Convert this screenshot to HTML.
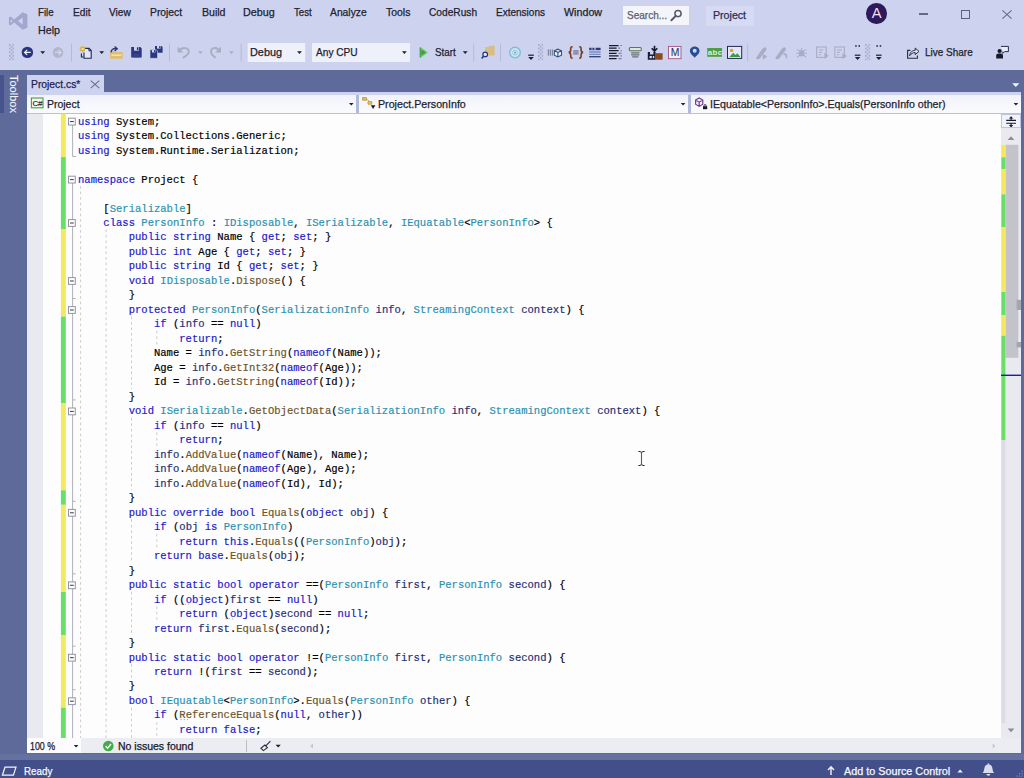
<!DOCTYPE html>
<html><head><meta charset="utf-8"><title>Project - Microsoft Visual Studio</title>
<style>
html,body{margin:0;padding:0}
body{width:1024px;height:778px;position:relative;overflow:hidden;background:#5E6A99;font-family:"Liberation Sans",sans-serif;font-size:10.4px;color:#1E1E2E}
.a{position:absolute}
.t{position:absolute;white-space:pre;line-height:12px;transform-origin:0 0;-webkit-text-stroke:0.25px}
#top{left:0;top:0;width:1024px;height:69.5px;background:#CDD3EE}
.sep{position:absolute;width:1px;top:43.5px;height:18px;background:#B4BBD8}
.combo{position:absolute;top:43px;height:19px;background:#EEF0FA}
.dd{position:absolute;width:0;height:0;border-left:2.4px solid transparent;border-right:2.4px solid transparent;border-top:2.6px solid #1E1E2E}
.ddg{border-top-color:#A9ADC4}
#code{position:absolute;left:78px;top:114.6px;-webkit-text-stroke:0.18px;font-family:"Liberation Mono",monospace;font-size:10.55px;line-height:14.49px;color:#000}
#code div{height:14.49px;white-space:pre}
.k{color:#2418C8}
.y{color:#2B91AF}
.m{color:#6E5428}
.l{color:#1F2F72}
</style></head><body>
<div class="a" id="top">
<!-- VS logo -->
<svg class="a" style="left:8px;top:11px" width="21" height="20" viewBox="0 0 21 20"><path d="M14.6 1.2 L19.4 3.2 V16.8 L14.6 18.8 L6.2 11.6 L2.6 14.4 L0.9 13.5 V6.5 L2.6 5.6 L6.2 8.4 Z M14.6 6.4 L10 10 L14.6 13.6 Z M2.7 8.2 V11.8 L4.7 10 Z" fill="#A3A7D0" fill-rule="evenodd"/></svg>
<span class="t" style="left:38.48px;top:7.2px;transform:scaleX(0.9361)">File</span>
<span class="t" style="left:72.50px;top:7.2px;transform:scaleX(0.9764)">Edit</span>
<span class="t" style="left:108.82px;top:7.2px;transform:scaleX(0.9752)">View</span>
<span class="t" style="left:149.70px;top:7.2px;transform:scaleX(0.9933)">Project</span>
<span class="t" style="left:201.60px;top:7.2px;transform:scaleX(1.0165)">Build</span>
<span class="t" style="left:243.40px;top:7.2px;transform:scaleX(1.0359)">Debug</span>
<span class="t" style="left:293.55px;top:7.2px;transform:scaleX(0.9323)">Test</span>
<span class="t" style="left:330.47px;top:7.2px;transform:scaleX(0.9930)">Analyze</span>
<span class="t" style="left:386.17px;top:7.2px;transform:scaleX(1.0070)">Tools</span>
<span class="t" style="left:429.24px;top:7.2px;transform:scaleX(0.9784)">CodeRush</span>
<span class="t" style="left:496.10px;top:7.2px;transform:scaleX(0.9636)">Extensions</span>
<span class="t" style="left:564.25px;top:7.2px;transform:scaleX(1.0303)">Window</span>
<span class="t" style="left:38.45px;top:25.4px;transform:scaleX(1.0313)">Help</span>
<!-- search -->
<div class="a" style="left:623px;top:6px;width:66px;height:18.6px;background:#F4F5FB;box-shadow:0 0 0 0.5px #C9CFE6"></div>
<span class="t" style="left:627.03px;top:9.8px;color:#5A5D6E;transform:scaleX(0.9637)">Search...</span>
<svg class="a" style="left:669px;top:8px" width="15" height="15" viewBox="0 0 15 15"><circle cx="9" cy="5.6" r="3.1" fill="none" stroke="#55586A" stroke-width="1.5"/><path d="M6.8 7.9 L2.4 12.2" stroke="#55586A" stroke-width="2" stroke-linecap="round"/></svg>
<!-- project label -->
<div class="a" style="left:706.3px;top:5.8px;width:48.2px;height:20px;background:#D6DBF3"></div>
<span class="t" style="left:713.10px;top:10px;color:#2A2E55;transform:scaleX(1.0220)">Project</span>
<!-- avatar -->
<div class="a" style="left:866.4px;top:3px;width:20.6px;height:20.6px;border-radius:50%;background:#2C1A5C"></div>
<span class="t" style="left:871.8px;top:5.4px;font-size:14.7px;line-height:16px;color:#F3DDF3;-webkit-text-stroke:0">A</span>
<!-- window buttons -->
<div class="a" style="left:919px;top:13.4px;width:9px;height:1.2px;background:#666B85"></div>
<div class="a" style="left:960.5px;top:10px;width:7.6px;height:6.6px;border:1.1px solid #5D6280"></div>
<svg class="a" style="left:1001px;top:9px" width="12" height="11" viewBox="0 0 12 11"><path d="M1.4 1.3 L10.6 9.6 M10.6 1.3 L1.4 9.6" stroke="#666B85" stroke-width="1.1" fill="none"/></svg>
<!-- toolbar -->
<svg class="a" style="left:0;top:36px" width="1024" height="34" viewBox="0 36 1024 34">
<defs>
<pattern id="grip" width="3.7" height="3.74" patternUnits="userSpaceOnUse"><rect x="0.2" y="0.3" width="1.2" height="1.2" fill="#7780B0"/><rect x="2.05" y="2.17" width="1.2" height="1.2" fill="#7780B0"/></pattern>
</defs>
<g transform="translate(8.9,43.8)"><rect x="0" y="0" width="5.2" height="16.4" fill="url(#grip)"/></g>
<!-- back -->
<circle cx="27.4" cy="52.4" r="5.7" fill="#28347F"/>
<path d="M24.6 52.4 H30.8 M27.2 49.9 L24.6 52.4 L27.2 54.9" stroke="#EEF1FC" stroke-width="1.3" fill="none"/>
<path d="M40.3 51.3 h4.8 l-2.4 2.7z" fill="#1E1E2E"/>
<!-- forward disabled -->
<circle cx="58" cy="52.4" r="5.3" fill="#B3B7CE"/>
<path d="M55 52.4 H61 M58.5 50 L61 52.4 L58.5 54.8" stroke="#D3D8EE" stroke-width="1.3" fill="none"/>
<rect x="71" y="43.5" width="1" height="18" fill="#B4BBD8"/>
<!-- new project -->
<path d="M84.9 48.4 H89.1 L91.2 50.5 V58.2 H84 V52.6" fill="#E3E7F7" stroke="#1F2A55" stroke-width="1.1"/>
<path d="M88.9 48.5 V50.8 H91.1" fill="none" stroke="#1F2A55" stroke-width="1"/>
<path d="M82.6 46 V51.8 M79.7 48.9 H85.5 M80.5 46.8 L84.7 51 M84.7 46.8 L80.5 51" stroke="#D9A92A" stroke-width="1.1"/>
<circle cx="82.6" cy="48.9" r="1.2" fill="#F3E3A0"/>
<path d="M81.4 53.6 v3.4 h2.2" stroke="#1F2A55" stroke-width="1.1" fill="none"/>
<path d="M99.3 51.3 h4.8 l-2.4 2.7z" fill="#1E1E2E"/>
<!-- open -->
<path d="M110 58.7 V50.8 H113.6 L114.6 52 H122.7 V58.7 Z" fill="#DDBE73"/>
<path d="M111.4 54.4 H121.4 V56 H111.4 Z" fill="#F0E0AE"/>
<path d="M111.2 52.4 C111 49.4 113.4 48.3 116.4 48.6 M114.6 46.4 L117.2 48.7 L114.6 51" stroke="#28347F" stroke-width="1.4" fill="none"/>
<!-- save -->
<path d="M131.2 47 H140.3 L141.7 48.4 V57.4 H131.2 Z" fill="#2B3780"/>
<rect x="134" y="47" width="4.8" height="3.7" fill="#CDD3EE"/><rect x="136.9" y="47.3" width="1.4" height="2.7" fill="#2B3780"/>
<rect x="133.4" y="53.6" width="6" height="3.8" fill="#35428A"/>
<!-- save all -->
<path d="M155 46 H161.5 L162.6 47.1 V52.8 H155 Z" fill="#2B3780"/>
<rect x="157" y="46" width="3.6" height="2.6" fill="#CDD3EE"/><rect x="159.1" y="46.2" width="1.1" height="2" fill="#2B3780"/>
<path d="M150 49.8 H156.3 L157.5 51 V58.3 H150 Z" fill="#2B3780" stroke="#CDD3EE" stroke-width="0.6"/>
<rect x="152" y="50" width="3.4" height="2.5" fill="#CDD3EE"/><rect x="154" y="50.2" width="1" height="1.9" fill="#2B3780"/>
<rect x="169" y="43.5" width="1" height="18" fill="#B4BBD8"/>
<!-- undo disabled -->
<path d="M179.6 50 C182.6 47 189 47.4 188.8 51.8 C188.7 54.4 186 56.2 182.8 57.8" stroke="#A9ADC4" stroke-width="1.9" fill="none"/>
<path d="M177.6 46.6 V52.4 H183.4 Z" fill="#A9ADC4"/>
<path d="M197.9 51.3 h4.8 l-2.4 2.7z" fill="#A9ADC4"/>
<!-- redo disabled -->
<path d="M219 50 C216.4 47 210.8 47.4 211 51.8 C211.1 54.4 213.2 56.2 215.8 57.8" stroke="#A9ADC4" stroke-width="1.9" fill="none"/>
<path d="M221 46.6 V52.4 H215.2 Z" fill="#A9ADC4"/>
<path d="M229.1 51.3 h4.8 l-2.4 2.7z" fill="#A9ADC4"/>
<rect x="240.7" y="43.5" width="1" height="18" fill="#B4BBD8"/>
<!-- combos -->
<rect x="247.7" y="43" width="57.5" height="19" fill="#EEF0FA"/>
<path d="M297.1 51.3 h4.8 l-2.4 2.7z" fill="#1E1E2E"/>
<rect x="312" y="43" width="98" height="19" fill="#EEF0FA"/>
<path d="M402 51.3 h4.8 l-2.4 2.7z" fill="#1E1E2E"/>
<!-- play -->
<path d="M420.6 48 L427 52.5 L420.6 57 Z" fill="#5A8A5E" stroke="#57DC57" stroke-width="1.3" stroke-linejoin="round"/>
<path d="M420.2 47.4 V57.6" stroke="#3E8E46" stroke-width="1"/>
<path d="M462.8 51.3 h4.8 l-2.4 2.7z" fill="#1E1E2E"/>
<rect x="473.2" y="43.5" width="1" height="18" fill="#B4BBD8"/>
<!-- find in files -->
<path d="M485 47 H488.6 L489.8 45.8 H494.6 V55.4 H485 Z" fill="#D8BE80"/>
<circle cx="485.2" cy="54.4" r="2.3" fill="#E8ECFA" stroke="#22357E" stroke-width="1.2"/>
<path d="M483.6 56.2 L481.6 58.4" stroke="#22357E" stroke-width="1.5"/>
<rect x="500" y="43.5" width="1" height="18" fill="#B4BBD8"/>
<!-- circular icon -->
<circle cx="515" cy="52.6" r="5.3" fill="#CFE4F2" stroke="#7DBBDA" stroke-width="1.4"/>
<circle cx="515" cy="52.6" r="2.4" fill="#E4F1F9" stroke="#8AC2DE" stroke-width="0.9"/>
<rect x="514.3" y="51.6" width="1.4" height="2" fill="#4A8DB5"/>
<!-- overflow -->
<rect x="528.2" y="54.6" width="5.6" height="1.2" fill="#1E1E2E"/><path d="M528.2 57 h5.6 l-2.8 3z" fill="#1E1E2E"/>
<g transform="translate(538,43.8)"><rect x="0" y="0" width="5.2" height="16.4" fill="url(#grip)"/></g>
<!-- cube icon -->
<path d="M548.3 49.4 V55.6 M550.3 49.4 V55.6 M552.3 49.4 V55.6" stroke="#6F7391" stroke-width="1"/>
<path d="M554.3 50.8 L557.9 49.2 L561.5 50.8 V55.2 L557.9 56.9 L554.3 55.2 Z M554.3 50.8 L557.9 52.4 L561.5 50.8 M557.9 52.4 V56.9" fill="#EEF0FA" stroke="#30507E" stroke-width="1.1"/>
<!-- braces -->
<path d="M572.6 46.7 C570.5 46.7 570.7 48 570.7 49.7 C570.7 51.4 570.2 52.2 568.7 52.4 C570.2 52.6 570.7 53.4 570.7 55.1 C570.7 56.8 570.5 58.1 572.6 58.1 M579.2 46.7 C581.3 46.7 581.1 48 581.1 49.7 C581.1 51.4 581.6 52.2 583.1 52.4 C581.6 52.6 581.1 53.4 581.1 55.1 C581.1 56.8 581.3 58.1 579.2 58.1" stroke="#7A3E1A" stroke-width="1.6" fill="none"/>
<rect x="573.2" y="50" width="5.4" height="4.8" fill="#8D93B5"/>
<!-- blue lines -->
<path d="M589.2 48.9 h2.4 M592.4 48.9 h2 M595.6 48.9 h5" stroke="#2C3A78" stroke-width="2.2"/>
<path d="M589.2 51.8 h11.4" stroke="#8E9CCB" stroke-width="2.4"/>
<path d="M589.2 54.3 h11.4" stroke="#6F7FB5" stroke-width="1.1"/>
<path d="M589.2 56.7 h11.4" stroke="#2C3A78" stroke-width="1.3"/>
<!-- black lines -->
<path d="M609 45.5 h9.6 M609 48.1 h7.6 M609 50.7 h9.6 M609 53.3 h7.6 M609 55.9 h9.6 M609 58.7 h7.6" stroke="#17182A" stroke-width="1.25"/>
<path d="M620.4 45.5 h1.4 M618.4 48.1 h1.6 M620.4 50.7 h1.4 M618.4 53.3 h3.2 M620.4 55.9 h1.4 M618.4 58.7 h3.2" stroke="#6A6F8C" stroke-width="1.1"/>
<!-- structure -->
<rect x="629.3" y="47.5" width="12" height="3.3" rx="1" fill="#DCE6DC" stroke="#5B7560" stroke-width="1.1"/>
<path d="M631.2 52.8 H639.4 M631.2 54.8 H639.4 M632.2 56.8 H638.4" stroke="#667276" stroke-width="1.2"/>
<!-- download -->
<path d="M654.5 45.8 V50.6 M651.7 48.2 L654.5 51 L657.3 48.2" stroke="#17182A" stroke-width="1.6" fill="none"/>
<path d="M647.8 52 H650 V54.4 H653.4 V52 H655.6 V59.7 H647.8 Z" fill="#1B1D33"/>
<rect x="649.6" y="56" width="2.2" height="2.2" fill="#DDE2F5"/><rect x="652.8" y="56" width="1.4" height="2.2" fill="#DDE2F5"/>
<rect x="655.6" y="53.2" width="7" height="6.5" fill="#8A4A22"/>
<!-- M -->
<rect x="668.5" y="46.4" width="12.5" height="12.3" fill="#EEF0FA" stroke="#A35580" stroke-width="0.9"/>
<!-- pin -->
<path d="M694.7 46.4 C691.7 46.4 689.9 48.6 689.9 51 C689.9 54 693.3 55.8 694.7 57.8 C696.1 55.8 699.5 54 699.5 51 C699.5 48.6 697.7 46.4 694.7 46.4 Z" fill="#2C4B96"/>
<circle cx="694.7" cy="50.8" r="2" fill="#BFE3EE"/>
<!-- abc -->
<rect x="707.2" y="48" width="14.8" height="8.8" fill="#4E9E49"/>
<!-- picture -->
<rect x="727.5" y="46.4" width="14.2" height="12" fill="#E2E6F6" stroke="#1E2A55" stroke-width="1"/>
<circle cx="731.6" cy="50.4" r="1.7" fill="#D9A02E"/>
<path d="M729.4 57 L733.2 52.8 L735.4 55 L737.4 53.2 L740.4 57 Z" fill="#3F9A46"/>
<rect x="747.2" y="43.5" width="1" height="18" fill="#B4BBD8"/>
<!-- gray icons -->
<g fill="#A9ADC4" stroke="none">
<path d="M756.2 57.6 L762.6 48.6 L765 47 L766.8 49 L765.4 51.2 L759.4 59 L756.4 59.2 Z"/>
<path d="M762.8 53.8 L767.4 56.6 L762.8 59.4 Z"/>
<path d="M775.6 57.6 L782 48.6 L784.4 47 L786.2 49 L784.8 51.2 L778.8 59 L775.8 59.2 Z"/>
<path d="M783.4 53.4 C786.4 53 788.4 55 786.8 58.6 L785.4 58 C786.4 55.8 785.4 54.8 783.4 55 Z"/>
<ellipse cx="801.6" cy="53.2" rx="2.7" ry="3.3"/>
</g>
<g fill="none" stroke="#A9ADC4" stroke-width="1.1">
<path d="M797 49.4 L800 51.6 M806.2 49.4 L803.2 51.6 M796.4 53.2 H806.8 M797 57.4 L800 55 M806.2 57.4 L803.2 55 M801.6 48 V50"/>
<rect x="816.6" y="47" width="9.6" height="10.4"/>
<path d="M819 50 h4 M819 52.4 h3 M819 54.8 h2" stroke-width="1"/>
<rect x="834.8" y="47" width="9.6" height="10.4"/>
<path d="M837 50 h5 M837 52.4 h3 M837 54.8 h2" stroke-width="1"/>
</g>
<path d="M824.4 52.8 L828.8 55.8 L824.4 58.8 Z M842.4 53 L847 56 L842.4 59 Z" fill="#A9ADC4"/>
<!-- overflows -->
<rect x="855.2" y="45.2" width="1.5" height="1.5" fill="#1E1E2E"/><rect x="858.5" y="45.2" width="1.5" height="1.5" fill="#1E1E2E"/>
<rect x="854.8" y="54.6" width="5.6" height="1.2" fill="#1E1E2E"/><path d="M854.8 57 h5.6 l-2.8 3z" fill="#1E1E2E"/>
<g transform="translate(865,43.8)"><rect x="0" y="0" width="5.2" height="16.4" fill="url(#grip)"/></g>
<rect x="876.4" y="45.2" width="1.5" height="1.5" fill="#1E1E2E"/><rect x="879.7" y="45.2" width="1.5" height="1.5" fill="#1E1E2E"/>
<rect x="876" y="54.6" width="5.6" height="1.2" fill="#1E1E2E"/><path d="M876 57 h5.6 l-2.8 3z" fill="#1E1E2E"/>
<!-- live share -->
<path d="M910.4 50.4 H907.6 V58.2 H917.4 V55.4" fill="none" stroke="#2B2D42" stroke-width="1.1"/>
<path d="M909.6 55.8 C910 52 912.4 50.4 915.2 50.4 V48 L919 51.4 L915.2 54.6 V52.6 C913 52.6 911.2 53.4 909.6 55.8 Z" fill="#DCE1F5" stroke="#2B2D42" stroke-width="1"/>
<!-- feedback -->
<path d="M1001 46.4 H1008.4 V51.6 H1004.6 L1002.8 53.4 V51.6" fill="#E8EBF8" stroke="#2B2D42" stroke-width="1"/>
<circle cx="999.6" cy="51" r="2.1" fill="#17182A"/>
<path d="M996.2 58.6 V55.6 C996.2 54.2 997.4 53.6 999.6 53.6 C1001.8 53.6 1003 54.2 1003 55.6 V58.6 Z" fill="#17182A"/>
</svg>
<span class="t" style="left:250.09px;top:46.6px;transform:scaleX(1.0454)">Debug</span>
<span class="t" style="left:315.66px;top:46.6px;transform:scaleX(0.9751)">Any CPU</span>
<span class="t" style="left:435.04px;top:46.6px;transform:scaleX(0.9487)">Start</span>
<span class="t" style="left:670.7px;top:46.9px;font-size:10.4px;color:#2B2D42;-webkit-text-stroke:0">M</span>
<span class="t" style="left:707.8px;top:46.6px;font-size:8px;letter-spacing:0.3px;color:#D8F2D4;font-weight:bold;-webkit-text-stroke:0">abc</span>
<span class="t" style="left:925.45px;top:46.6px;transform:scaleX(0.9610)">Live Share</span>
</div>
<!-- toolbox strip -->
<div class="a" style="left:0;top:75px;width:3.6px;height:37.5px;background:#46538C"></div>
<span class="t" style="left:19.6px;top:75.4px;color:#F2F4FC;transform:rotate(90deg);font-size:11px;-webkit-text-stroke:0.1px">Toolbox</span>
<!-- tab -->
<div class="a" style="left:27px;top:75px;width:77px;height:19.5px;background:#CDD3EE"></div>
<div class="a" style="left:27px;top:91.8px;width:994px;height:2.8px;background:#CDD3EE"></div>
<span class="t" style="left:31.09px;top:79.4px;color:#1E2250;transform:scaleX(0.9942)">Project.cs*</span>
<svg class="a" style="left:89px;top:79px" width="12" height="11" viewBox="0 0 12 11"><path d="M1.7 1.7 L10.3 9.1 M10.3 1.7 L1.7 9.1" stroke="#6A7090" stroke-width="1.1" fill="none"/></svg>
<svg class="a" style="left:1009.8px;top:80.9px" width="12" height="8" viewBox="0 0 12 8"><path d="M2.2 2.2 h7.2 l-3.6 3.8z" fill="#F2F4FC"/></svg>
<!-- nav bar -->
<div class="a" style="left:27px;top:94.5px;width:994px;height:18.6px;background:linear-gradient(#F1F3FB,#FBFBFE)"></div>

<div class="a" style="left:355.8px;top:95px;width:3px;height:18px;background:#B2BADC"></div>
<div class="a" style="left:688px;top:95px;width:3px;height:18px;background:#B2BADC"></div>
<svg class="a" style="left:27px;top:94px" width="994" height="20" viewBox="27 94 994 20">
<!-- C# icon -->
<rect x="31.4" y="98" width="11.6" height="9.8" fill="#F4F8F0" stroke="#4E9A45" stroke-width="1.1"/>
<path d="M349 103 h4.6 l-2.3 2.6z M680.8 103 h4.6 l-2.3 2.6z M1013.6 103 h4.6 l-2.3 2.6z" fill="#1E1E2E"/>
<!-- class icon -->
<path d="M362.6 97.6 h3.8 v2.6 h-3.8z" fill="#E7C56A" stroke="#C09A38" stroke-width="0.9"/>
<path d="M366.4 99 L368.4 100.4 L368.6 102.6" fill="none" stroke="#B79A50" stroke-width="0.9"/>
<path d="M368 101.6 h3.8 v2.6 h-3.8z" fill="#E7C56A" stroke="#C09A38" stroke-width="0.9"/>
<path d="M370.8 105.2 h4.6 l-2.3 3.8z" fill="#17182A"/>
<!-- method icon -->
<path d="M695.6 100 L699.2 98 L702.8 100 V104.2 L699.2 106.4 L695.6 104.2 Z M695.6 100 L699.2 102.2 L702.8 100 M699.2 102.2 V106.4" fill="#F4EEFA" stroke="#6F3A96" stroke-width="1.15"/>
<rect x="703" y="106.2" width="4.2" height="3" fill="#17182A"/>
<path d="M704.1 106.2 v-0.6 a1 1 0 0 1 2 0 v0.6" fill="none" stroke="#17182A" stroke-width="0.9"/>
</svg>
<span class="t" style="left:32.6px;top:98.4px;font-size:8px;color:#17182A;letter-spacing:-0.3px;-webkit-text-stroke:0.15px">C#</span>
<span class="t" style="left:46.61px;top:99.2px;transform:scaleX(1.0065)">Project</span>
<span class="t" style="left:378.10px;top:99.2px;transform:scaleX(1.0272)">Project.PersonInfo</span>
<span class="t" style="left:710.41px;top:99.2px;transform:scaleX(1.0222)">IEquatable&lt;PersonInfo&gt;.Equals(PersonInfo other)</span>
<!-- editor -->
<div class="a" style="left:27px;top:113.6px;width:974.4px;height:624.7px;background:#FDFDFE"></div>
<div class="a" style="left:27px;top:113.6px;width:16.4px;height:624.7px;background:#E9EAEF"></div>
<div class="a" style="left:27px;top:112.8px;width:994px;height:1.1px;background:#B9BFDE"></div>
<svg class="a" style="left:27px;top:113px" width="975" height="626" viewBox="27 113 975 626">
<rect x="60.9" y="113.6" width="4.9" height="43.5" fill="#F4E85E"/>
<rect x="60.9" y="157.1" width="4.9" height="72.4" fill="#68E068"/>
<rect x="60.9" y="229.5" width="4.9" height="86.9" fill="#F4E85E"/>
<rect x="60.9" y="316.5" width="4.9" height="86.9" fill="#68E068"/>
<rect x="60.9" y="403.4" width="4.9" height="86.9" fill="#F4E85E"/>
<rect x="60.9" y="490.3" width="4.9" height="14.5" fill="#68E068"/>
<rect x="60.9" y="504.8" width="4.9" height="86.9" fill="#F4E85E"/>
<rect x="60.9" y="591.8" width="4.9" height="43.5" fill="#68E068"/>
<rect x="60.9" y="635.2" width="4.9" height="72.5" fill="#F4E85E"/>
<rect x="60.9" y="707.7" width="4.9" height="30.6" fill="#68E068"/>
<path d="M72.6 124.6 V156.5 H76.0" stroke="#B0B0B8" stroke-width="1" fill="none"/>
<path d="M72.6 182.6 V738.3" stroke="#B0B0B8" stroke-width="1" fill="none"/>
<path d="M72.6 298.5 h3" stroke="#B0B0B8" stroke-width="1" fill="none"/>
<path d="M72.6 399.9 h3" stroke="#B0B0B8" stroke-width="1" fill="none"/>
<path d="M72.6 501.3 h3" stroke="#B0B0B8" stroke-width="1" fill="none"/>
<path d="M72.6 573.8 h3" stroke="#B0B0B8" stroke-width="1" fill="none"/>
<path d="M72.6 646.2 h3" stroke="#B0B0B8" stroke-width="1" fill="none"/>
<path d="M72.6 689.7 h3" stroke="#B0B0B8" stroke-width="1" fill="none"/>
<rect x="68.5" y="118.2" width="6.8" height="6.8" fill="#FDFDFE" stroke="#9494A0" stroke-width="1"/><path d="M70.0 121.6 h3.8" stroke="#3A3A44" stroke-width="1"/>
<rect x="68.5" y="176.2" width="6.8" height="6.8" fill="#FDFDFE" stroke="#9494A0" stroke-width="1"/><path d="M70.0 179.6 h3.8" stroke="#3A3A44" stroke-width="1"/>
<rect x="68.5" y="219.6" width="6.8" height="6.8" fill="#FDFDFE" stroke="#9494A0" stroke-width="1"/><path d="M70.0 223.0 h3.8" stroke="#3A3A44" stroke-width="1"/>
<rect x="68.5" y="277.6" width="6.8" height="6.8" fill="#FDFDFE" stroke="#9494A0" stroke-width="1"/><path d="M70.0 281.0 h3.8" stroke="#3A3A44" stroke-width="1"/>
<rect x="68.5" y="306.6" width="6.8" height="6.8" fill="#FDFDFE" stroke="#9494A0" stroke-width="1"/><path d="M70.0 310.0 h3.8" stroke="#3A3A44" stroke-width="1"/>
<rect x="68.5" y="408.0" width="6.8" height="6.8" fill="#FDFDFE" stroke="#9494A0" stroke-width="1"/><path d="M70.0 411.4 h3.8" stroke="#3A3A44" stroke-width="1"/>
<rect x="68.5" y="509.4" width="6.8" height="6.8" fill="#FDFDFE" stroke="#9494A0" stroke-width="1"/><path d="M70.0 512.8 h3.8" stroke="#3A3A44" stroke-width="1"/>
<rect x="68.5" y="581.9" width="6.8" height="6.8" fill="#FDFDFE" stroke="#9494A0" stroke-width="1"/><path d="M70.0 585.3 h3.8" stroke="#3A3A44" stroke-width="1"/>
<rect x="68.5" y="654.3" width="6.8" height="6.8" fill="#FDFDFE" stroke="#9494A0" stroke-width="1"/><path d="M70.0 657.7 h3.8" stroke="#3A3A44" stroke-width="1"/>
<rect x="68.5" y="697.8" width="6.8" height="6.8" fill="#FDFDFE" stroke="#9494A0" stroke-width="1"/><path d="M70.0 701.2 h3.8" stroke="#3A3A44" stroke-width="1"/>
<path d="M80.6 186.1 V738.3" stroke="#CACAD1" stroke-width="1" stroke-dasharray="2.6 2.9" fill="none"/>
<path d="M106.1 229.5 V738.3" stroke="#CACAD1" stroke-width="1" stroke-dasharray="2.6 2.9" fill="none"/>
<path d="M131.5 316.5 V388.9" stroke="#CACAD1" stroke-width="1" stroke-dasharray="2.6 2.9" fill="none"/>
<path d="M131.5 417.9 V490.3" stroke="#CACAD1" stroke-width="1" stroke-dasharray="2.6 2.9" fill="none"/>
<path d="M131.5 519.3 V562.8" stroke="#CACAD1" stroke-width="1" stroke-dasharray="2.6 2.9" fill="none"/>
<path d="M131.5 591.8 V635.2" stroke="#CACAD1" stroke-width="1" stroke-dasharray="2.6 2.9" fill="none"/>
<path d="M131.5 664.2 V678.7" stroke="#CACAD1" stroke-width="1" stroke-dasharray="2.6 2.9" fill="none"/>
<path d="M131.5 707.7 V738.3" stroke="#CACAD1" stroke-width="1" stroke-dasharray="2.6 2.9" fill="none"/>
<path d="M156.8 330.9 V345.4" stroke="#CACAD1" stroke-width="1" stroke-dasharray="2.6 2.9" fill="none"/>
<path d="M156.8 432.4 V446.9" stroke="#CACAD1" stroke-width="1" stroke-dasharray="2.6 2.9" fill="none"/>
<path d="M156.8 533.8 V548.3" stroke="#CACAD1" stroke-width="1" stroke-dasharray="2.6 2.9" fill="none"/>
<path d="M156.8 606.3 V620.8" stroke="#CACAD1" stroke-width="1" stroke-dasharray="2.6 2.9" fill="none"/>
<path d="M156.8 722.2 V736.7" stroke="#CACAD1" stroke-width="1" stroke-dasharray="2.6 2.9" fill="none"/>
<path d="M181.5 604.2 h8" stroke="#A8A8B0" stroke-width="1" stroke-dasharray="1.2 2" fill="none"/>
<path d="M225.5 618.8 h8" stroke="#A8A8B0" stroke-width="1" stroke-dasharray="1.2 2" fill="none"/>
<path d="M180.5 719.6 h8" stroke="#A8A8B0" stroke-width="1" stroke-dasharray="1.2 2" fill="none"/>
</svg>
<div id="code">
<div><span class="k">using</span> System;</div>
<div><span class="k">using</span> System.Collections.Generic;</div>
<div><span class="k">using</span> System.Runtime.Serialization;</div>
<div></div>
<div><span class="k">namespace</span> Project {</div>
<div></div>
<div>    [<span class="y">Serializable</span>]</div>
<div>    <span class="k">class</span> <span class="y">PersonInfo</span> : <span class="y">IDisposable</span>, <span class="y">ISerializable</span>, <span class="y">IEquatable</span>&lt;<span class="y">PersonInfo</span>&gt; {</div>
<div>        <span class="k">public</span> <span class="k">string</span> Name { <span class="k">get</span>; <span class="k">set</span>; }</div>
<div>        <span class="k">public</span> <span class="k">int</span> Age { <span class="k">get</span>; <span class="k">set</span>; }</div>
<div>        <span class="k">public</span> <span class="k">string</span> Id { <span class="k">get</span>; <span class="k">set</span>; }</div>
<div>        <span class="k">void</span> <span class="y">IDisposable</span>.<span class="m">Dispose</span>() {</div>
<div>        }</div>
<div>        <span class="k">protected</span> <span class="y">PersonInfo</span>(<span class="y">SerializationInfo</span> <span class="l">info</span>, <span class="y">StreamingContext</span> <span class="l">context</span>) {</div>
<div>            <span class="k">if</span> (<span class="l">info</span> == <span class="k">null</span>)</div>
<div>                <span class="k">return</span>;</div>
<div>            Name = <span class="l">info</span>.<span class="m">GetString</span>(<span class="k">nameof</span>(Name));</div>
<div>            Age = <span class="l">info</span>.<span class="m">GetInt32</span>(<span class="k">nameof</span>(Age));</div>
<div>            Id = <span class="l">info</span>.<span class="m">GetString</span>(<span class="k">nameof</span>(Id));</div>
<div>        }</div>
<div>        <span class="k">void</span> <span class="y">ISerializable</span>.<span class="m">GetObjectData</span>(<span class="y">SerializationInfo</span> <span class="l">info</span>, <span class="y">StreamingContext</span> <span class="l">context</span>) {</div>
<div>            <span class="k">if</span> (<span class="l">info</span> == <span class="k">null</span>)</div>
<div>                <span class="k">return</span>;</div>
<div>            <span class="l">info</span>.<span class="m">AddValue</span>(<span class="k">nameof</span>(Name), Name);</div>
<div>            <span class="l">info</span>.<span class="m">AddValue</span>(<span class="k">nameof</span>(Age), Age);</div>
<div>            <span class="l">info</span>.<span class="m">AddValue</span>(<span class="k">nameof</span>(Id), Id);</div>
<div>        }</div>
<div>        <span class="k">public</span> <span class="k">override</span> <span class="k">bool</span> <span class="m">Equals</span>(<span class="k">object</span> <span class="l">obj</span>) {</div>
<div>            <span class="k">if</span> (<span class="l">obj</span> <span class="k">is</span> <span class="y">PersonInfo</span>)</div>
<div>                <span class="k">return</span> <span class="k">this</span>.<span class="m">Equals</span>((<span class="y">PersonInfo</span>)<span class="l">obj</span>);</div>
<div>            <span class="k">return</span> <span class="k">base</span>.<span class="m">Equals</span>(<span class="l">obj</span>);</div>
<div>        }</div>
<div>        <span class="k">public</span> <span class="k">static</span> <span class="k">bool</span> <span class="k">operator</span> ==(<span class="y">PersonInfo</span> <span class="l">first</span>, <span class="y">PersonInfo</span> <span class="l">second</span>) {</div>
<div>            <span class="k">if</span> ((<span class="k">object</span>)<span class="l">first</span> == <span class="k">null</span>)</div>
<div>                <span class="k">return</span> (<span class="k">object</span>)<span class="l">second</span> == <span class="k">null</span>;</div>
<div>            <span class="k">return</span> <span class="l">first</span>.<span class="m">Equals</span>(<span class="l">second</span>);</div>
<div>        }</div>
<div>        <span class="k">public</span> <span class="k">static</span> <span class="k">bool</span> <span class="k">operator</span> !=(<span class="y">PersonInfo</span> <span class="l">first</span>, <span class="y">PersonInfo</span> <span class="l">second</span>) {</div>
<div>            <span class="k">return</span> !(<span class="l">first</span> == <span class="l">second</span>);</div>
<div>        }</div>
<div>        <span class="k">bool</span> <span class="y">IEquatable</span>&lt;<span class="y">PersonInfo</span>&gt;.<span class="m">Equals</span>(<span class="y">PersonInfo</span> <span class="l">other</span>) {</div>
<div>            <span class="k">if</span> (<span class="m">ReferenceEquals</span>(<span class="k">null</span>, <span class="l">other</span>))</div>
<div>                <span class="k">return</span> <span class="k">false</span>;</div>
</div>
<!-- I-beam cursor -->
<svg class="a" style="left:636.5px;top:450px" width="9" height="17" viewBox="0 0 9 17"><path d="M1.4 1.5 H3.6 M5.4 1.5 H7.6 M1.4 15.5 H3.6 M5.4 15.5 H7.6" stroke="#26262E" stroke-width="1.1" fill="none"/><path d="M3.4 1.7 L4.5 2.6 L5.6 1.7 M4.5 2.4 V14.6 M3.4 15.3 L4.5 14.4 L5.6 15.3" stroke="#5A5A64" stroke-width="1.1" fill="none"/></svg>
<!-- scrollbar -->
<div class="a" style="left:1001.4px;top:113.6px;width:19.6px;height:624.7px;background:#E9EAEF"></div>
<div class="a" style="left:1001.4px;top:113.6px;width:19.2px;height:14.6px;background:#F1F3FB;box-shadow:inset 0 0 0 1px #BFC5DE"></div>
<svg class="a" style="left:1001px;top:113px" width="21" height="626" viewBox="1001 113 21 626">
<path d="M1006.2 120.4 H1016 M1006.2 123.2 H1016 M1011.1 117 V120 M1011.1 123.6 V126.4" stroke="#17182A" stroke-width="1.1" fill="none"/><path d="M1008.9 118.6 L1011.1 116.2 L1013.3 118.6 Z M1008.9 124.9 L1011.1 127.3 L1013.3 124.9 Z" fill="#17182A"/>
<path d="M1007.6 140 h6.8 l-3.4 -3.8z" fill="#8A8C96"/>
<path d="M1007.6 728.6 h6.8 l-3.4 3.6z" fill="#8A8C96"/>
<rect x="1005.6" y="144.8" width="12.8" height="213" fill="#C2C3CB"/>
<rect x="1001.4" y="144.8" width="4" height="12.5" fill="#F4E85E"/>
<rect x="1001.4" y="157.3" width="4" height="11.7" fill="#68E068"/>
<rect x="1001.4" y="169" width="4" height="25.4" fill="#F4E85E"/>
<rect x="1001.4" y="194.4" width="4" height="32.9" fill="#68E068"/>
<rect x="1001.4" y="227.3" width="4" height="64.7" fill="#F4E85E"/>
<rect x="1001.4" y="292" width="4" height="23.3" fill="#68E068"/>
<rect x="1001.4" y="315.3" width="4" height="20.5" fill="#F4E85E"/>
<rect x="1001.4" y="335.8" width="4" height="104.2" fill="#68E068"/>
<rect x="1001.4" y="440" width="4" height="283" fill="#DCDDE4"/>
<rect x="1016.6" y="299.8" width="4.4" height="10.2" fill="#A4A6B2"/>
<rect x="1016.6" y="342" width="4.4" height="5.4" fill="#A4A6B2"/>
<rect x="1000.4" y="374.6" width="20.6" height="1.4" fill="#1C1CA8"/>
</svg>
<!-- bottom bar -->
<div class="a" style="left:27px;top:738.3px;width:994px;height:15px;background:#ECEDF2"></div>
<div class="a" style="left:27px;top:738.3px;width:54.4px;height:15px;background:#FCFCFE"></div>
<span class="t" style="left:30.00px;top:741.4px;color:#17182A;transform:scaleX(0.8533)">100 %</span>
<svg class="a" style="left:27px;top:738px" width="994" height="16" viewBox="27 738 994 16">
<path d="M73.8 745 h4.6 l-2.3 2.6z" fill="#1E1E2E"/>
<circle cx="108.3" cy="746" r="5.3" fill="#43AB47"/>
<path d="M105.6 746.2 L107.6 748.2 L111 744" stroke="#fff" stroke-width="1.4" fill="none"/>
<rect x="246" y="740" width="1" height="12" fill="#B9BBC8"/>
<path d="M270.4 741.2 L265.8 745.8 M264.8 745 L267.4 747.6 L263.4 750.6 L260.9 748.2 Z" stroke="#2B2D42" stroke-width="1.1" fill="none"/>
<path d="M275.6 744.8 h5.2 l-2.6 2.8z" fill="#1E1E2E"/>
<path d="M313 743.6 v5 l-2.8 -2.5z" fill="#C4C6D0"/>
<path d="M992.6 743.6 v5 l2.8 -2.5z" fill="#C4C6D0"/>
</svg>
<span class="t" style="left:118.00px;top:741.4px;color:#17182A;transform:scaleX(1.0106)">No issues found</span>
<!-- status bar -->
<div class="a" style="left:0;top:753.6px;width:1024px;height:6.6px;background:#6572A0"></div>
<div class="a" style="left:0;top:760px;width:1024px;height:18px;background:#424F8B"></div>
<svg class="a" style="left:0;top:760px" width="1024" height="18" viewBox="0 760 1024 18">
<path d="M5 767.2 H16 L13.4 775.2 H2.4 Z" fill="none" stroke="#F2F4FC" stroke-width="1.2"/>
<path d="M831 775 V767 M828 770 L831 766.8 L834 770" stroke="#F2F4FC" stroke-width="1.4" fill="none"/>
<path d="M957.4 772.4 h5.4 l-2.7 -3z" fill="#F2F4FC"/>
<path d="M982.6 773 C984.6 771.6 983.8 767.6 985.4 765.8 C986.8 764.2 990 764.2 991.4 765.8 C993 767.6 992.2 771.6 994.2 773 Z" fill="#D9DCEC"/>
<path d="M986.4 774 h4 a2 1.8 0 0 1 -4 0z" fill="#D9DCEC"/>
<rect x="987.7" y="763.4" width="1.4" height="1.4" fill="#D9DCEC"/>
<path d="M1021.5 775.5 h1.2 v1.2 h-1.2z M1019 775.5 h1.2 v1.2 h-1.2z M1021.5 773 h1.2 v1.2 h-1.2z M1016.5 775.5 h1.2 v1.2 h-1.2z M1019 773 h1.2 v1.2 h-1.2z M1021.5 770.5 h1.2 v1.2 h-1.2z" fill="#7C88BB"/>
</svg>
<span class="t" style="left:23.53px;top:765.9px;color:#F6F7FD;transform:scaleX(0.9437)">Ready</span>
<span class="t" style="left:844.48px;top:765.9px;color:#F6F7FD;transform:scaleX(1.0383)">Add to Source Control</span>
</body></html>
